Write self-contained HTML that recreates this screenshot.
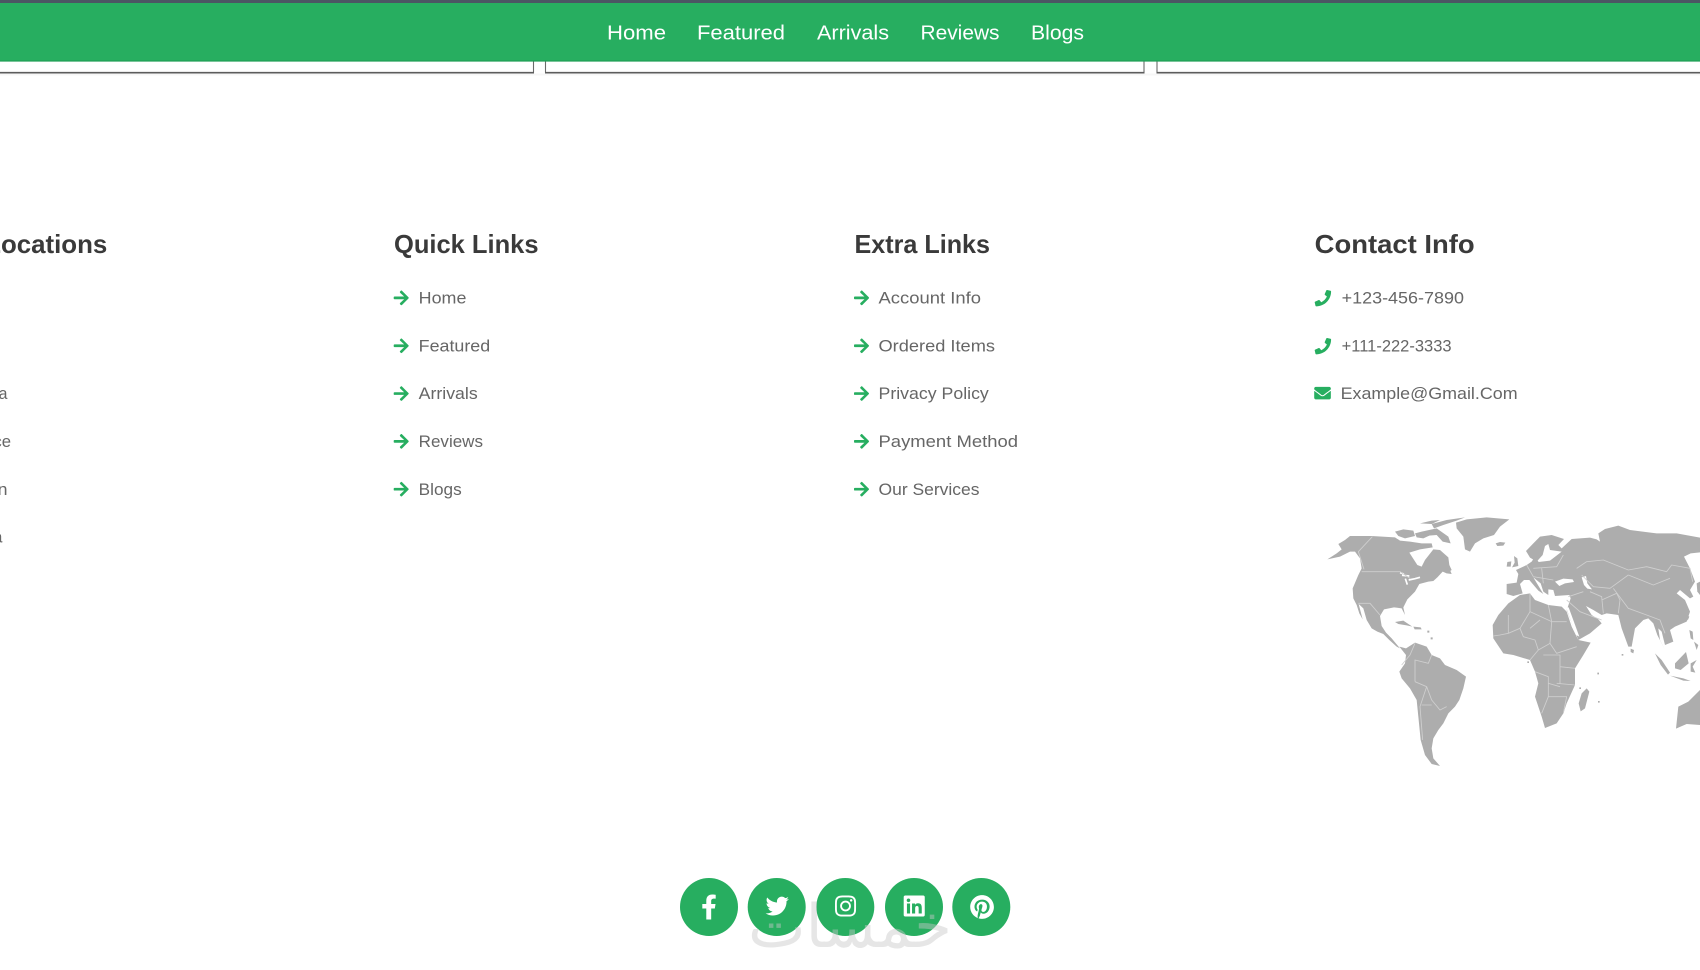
<!DOCTYPE html>
<html lang="en">
<head>
<meta charset="utf-8">
<title>Footer</title>
<style>
html,body{margin:0;padding:0;background:#fff;width:1700px;height:970px;overflow:hidden}
svg{display:block}
text{font-family:"Liberation Sans","DejaVu Sans",sans-serif}
.nav{font-size:20px;fill:#fff}
.h{font-size:26px;font-weight:700;fill:#3a3a3a}
.l{font-size:16.5px;fill:#666}
</style>
</head>
<body>
<svg width="1700" height="970" viewBox="0 0 1700 970" xmlns="http://www.w3.org/2000/svg">
<defs>
<path id="arrow" fill="#27ae60" d="M190.5 66.9l22.2-22.2c9.4-9.4 24.6-9.4 33.9 0L441 239c9.4 9.4 9.4 24.6 0 33.9L246.6 467.3c-9.4 9.4-24.6 9.4-33.9 0l-22.2-22.2c-9.5-9.5-9.3-25 .4-34.3L311.4 296H24c-13.3 0-24-10.7-24-24v-32c0-13.3 10.7-24 24-24h287.4L190.9 101.2c-9.8-9.3-10-24.8-.4-34.3z"/>
<path id="phone" fill="#27ae60" d="M493.4 24.6l-104-24c-11.3-2.6-22.9 3.3-27.5 13.9l-48 112c-4.2 9.8-1.4 21.3 6.9 28l60.6 49.6c-36 76.7-98.9 140.5-177.2 177.2l-49.6-60.6c-6.8-8.3-18.2-11.1-28-6.9l-112 48C3.9 366.5-2 378.1.6 389.4l24 104C27.1 504.2 36.7 512 48 512c256.1 0 464-207.5 464-464 0-11.2-7.7-20.9-18.6-23.4z"/>
<filter id="soft" x="-5%" y="-5%" width="110%" height="110%"><feGaussianBlur stdDeviation="0.35"/></filter>
</defs>

<rect width="1700" height="970" fill="#fff"/>

<!-- cards under the header -->
<rect x="0" y="73.5" width="1700" height="2" fill="#f7f7f7"/>
<path d="M533.5 60V72.5M545.5 60V72.5M1144 60V72.5M1157 60V72.5" fill="none" stroke="#6a6a6a" stroke-width="1.1"/>
<path d="M0 72.7H534M545 72.7H1144.5M1156.5 72.7H1700" fill="none" stroke="#5c5c5c" stroke-width="1.6"/>

<!-- header -->
<rect x="0" y="0" width="1700" height="3" fill="#4b5563"/>
<rect x="0" y="3" width="1700" height="58.5" fill="#27ae60"/>
<rect x="0" y="60.4" width="1700" height="1.2" fill="#1f9d55"/>
<text class="nav" x="607" y="39.5" textLength="59" lengthAdjust="spacingAndGlyphs">Home</text>
<text class="nav" x="697" y="39.5" textLength="88" lengthAdjust="spacingAndGlyphs">Featured</text>
<text class="nav" x="817" y="39.5" textLength="72" lengthAdjust="spacingAndGlyphs">Arrivals</text>
<text class="nav" x="920.5" y="39.5" textLength="79" lengthAdjust="spacingAndGlyphs">Reviews</text>
<text class="nav" x="1031" y="39.5" textLength="53" lengthAdjust="spacingAndGlyphs">Blogs</text>

<!-- headings -->
<text class="h" x="-68" y="253" textLength="175.3" lengthAdjust="spacingAndGlyphs">Our Locations</text>
<text class="h" x="394" y="253" textLength="144.5" lengthAdjust="spacingAndGlyphs">Quick Links</text>
<text class="h" x="854.5" y="253" textLength="135.5" lengthAdjust="spacingAndGlyphs">Extra Links</text>
<text class="h" x="1314.7" y="253" textLength="160" lengthAdjust="spacingAndGlyphs">Contact Info</text>

<!-- locations -->
<text class="l" x="-41" y="303.6" textLength="34" lengthAdjust="spacingAndGlyphs">India</text>
<text class="l" x="-41" y="351.4" textLength="30" lengthAdjust="spacingAndGlyphs">USA</text>
<text class="l" x="-41" y="399.2" textLength="48.5" lengthAdjust="spacingAndGlyphs">Russia</text>
<text class="l" x="-41" y="447" textLength="52" lengthAdjust="spacingAndGlyphs">France</text>
<text class="l" x="-41" y="494.8" textLength="48.5" lengthAdjust="spacingAndGlyphs">Japan</text>
<text class="l" x="-41" y="542.6" textLength="43.5" lengthAdjust="spacingAndGlyphs">Africa</text>

<!-- quick links -->
<g transform="translate(393.7 289.3) scale(.0335)"><use href="#arrow"/></g>
<g transform="translate(393.7 337.2) scale(.0335)"><use href="#arrow"/></g>
<g transform="translate(393.7 385) scale(.0335)"><use href="#arrow"/></g>
<g transform="translate(393.7 432.8) scale(.0335)"><use href="#arrow"/></g>
<g transform="translate(393.7 480.6) scale(.0335)"><use href="#arrow"/></g>
<text class="l" x="418.7" y="303.6" textLength="47.7" lengthAdjust="spacingAndGlyphs">Home</text>
<text class="l" x="418.7" y="351.4" textLength="71.5" lengthAdjust="spacingAndGlyphs">Featured</text>
<text class="l" x="418.7" y="399.2" textLength="59" lengthAdjust="spacingAndGlyphs">Arrivals</text>
<text class="l" x="418.7" y="447" textLength="64.3" lengthAdjust="spacingAndGlyphs">Reviews</text>
<text class="l" x="418.7" y="494.8" textLength="43" lengthAdjust="spacingAndGlyphs">Blogs</text>

<!-- extra links -->
<g transform="translate(854 289.3) scale(.0335)"><use href="#arrow"/></g>
<g transform="translate(854 337.2) scale(.0335)"><use href="#arrow"/></g>
<g transform="translate(854 385) scale(.0335)"><use href="#arrow"/></g>
<g transform="translate(854 432.8) scale(.0335)"><use href="#arrow"/></g>
<g transform="translate(854 480.6) scale(.0335)"><use href="#arrow"/></g>
<text class="l" x="878.5" y="303.6" textLength="102.5" lengthAdjust="spacingAndGlyphs">Account Info</text>
<text class="l" x="878.5" y="351.4" textLength="116.5" lengthAdjust="spacingAndGlyphs">Ordered Items</text>
<text class="l" x="878.5" y="399.2" textLength="110.3" lengthAdjust="spacingAndGlyphs">Privacy Policy</text>
<text class="l" x="878.5" y="447" textLength="139.5" lengthAdjust="spacingAndGlyphs">Payment Method</text>
<text class="l" x="878.5" y="494.8" textLength="101" lengthAdjust="spacingAndGlyphs">Our Services</text>

<!-- contact -->
<g transform="translate(1314.7 290) scale(.032)"><use href="#phone"/></g>
<g transform="translate(1314.7 338) scale(.032)"><use href="#phone"/></g>
<path transform="translate(1314.2 384.8) scale(.0325)" fill="#27ae60" d="M502.3 190.8c3.9-3.1 9.7-.2 9.7 4.7V400c0 26.5-21.5 48-48 48H48c-26.5 0-48-21.5-48-48V195.6c0-5 5.7-7.8 9.7-4.7 22.4 17.4 52.1 39.5 154.1 113.6 21.1 15.4 56.7 47.8 92.2 47.6 35.7.3 72-32.8 92.3-47.6 102-74.1 131.6-96.3 154-113.7zM256 320c23.2.4 56.6-29.2 73.4-41.4 132.7-96.3 142.8-104.7 173.4-128.7 5.8-4.5 9.2-11.5 9.2-18.9v-19c0-26.5-21.5-48-48-48H48C21.5 64 0 85.5 0 112v19c0 7.4 3.4 14.3 9.2 18.9 30.6 23.9 40.7 32.4 173.4 128.7 16.8 12.2 50.2 41.8 73.4 41.4z"/>
<text class="l" x="1341.6" y="303.6" textLength="122.4" lengthAdjust="spacingAndGlyphs">+123-456-7890</text>
<text class="l" x="1341.6" y="351.4" textLength="110" lengthAdjust="spacingAndGlyphs">+111-222-3333</text>
<text class="l" x="1340.6" y="399.2" textLength="177" lengthAdjust="spacingAndGlyphs">Example@Gmail.Com</text>

<!-- world map -->
<g filter="url(#soft)">
<g transform="translate(1300 500) scale(.33333)">
<g fill="#adadad" stroke="none">
<!-- North + Central America -->
<path d="M82 178L110 160L125 148L115 132L135 120L150 108L215 108L285 112L300 122L330 125L365 130L395 130L398 142L360 148L328 158L352 195L365 200L375 180L400 148L420 150L445 172L448 195L455 210L440 220L428 215L412 232L400 243L385 245L358 252L345 275L322 298L310 322L315 345L305 325L282 322L252 328L240 348L245 378L258 398L275 415L300 445L290 440L268 420L250 402L232 395L215 385L200 360L190 325L176 312L188 358L178 340L170 315L160 295L158 265L175 225L185 205L180 175L165 155L150 155L120 170Z"/>
<!-- Arctic islands -->
<path d="M285 95L310 88L340 92L345 108L315 115L295 108Z"/>
<path d="M345 100L365 95L392 105L370 115L350 112Z"/>
<path d="M395 72L440 60L495 52L470 62L430 75L402 85Z"/>
<path d="M365 95L410 85L445 110L452 130L428 125L410 105L372 108Z"/>
<path d="M360 70L395 62L420 60L395 72Z"/>
<path d="M440 205L450 210L455 222L440 220Z"/>
<!-- Greenland -->
<path d="M468 68L500 58L560 52L628 58L600 80L582 105L550 115L525 130L510 155L495 148L490 110L470 85Z"/>
<!-- Iceland -->
<path d="M587 130L600 126L616 128L610 137L592 138Z"/>
<!-- Caribbean -->
<path d="M285 366L310 362L337 380L320 376L295 372Z"/>
<path d="M340 380L362 382L365 388L344 388Z"/>
<path d="M382 392h6v6h-6zM392 412h6v6h-6z"/>
<!-- South America -->
<path d="M298 440L318 445L345 428L380 440L395 465L420 475L435 495L470 510L498 530L490 565L478 600L465 620L445 640L430 670L415 690L400 715L395 745L400 775L420 798L395 792L375 765L362 720L355 650L350 600L330 565L305 535L298 515L315 490L318 465Z"/>
<!-- Africa -->
<path d="M578 375L595 345L625 310L660 285L690 280L705 300L745 315L785 320L800 335L815 380L835 420L872 428L850 465L825 505L825 555L800 610L790 640L770 670L735 684L725 650L705 590L715 550L705 515L690 480L640 465L610 460L580 415Z"/>
<path d="M860 565L868 575L855 625L842 634L836 610L845 580Z"/>
<!-- Eurasia -->
<path d="M678 153L700 130L720 110L755 105L792 117L775 135L785 145L815 117L870 113L890 118L900 125L895 100L915 87L955 77L990 90L1070 100L1130 100L1200 113L1200 157L1172 160L1152 170L1170 205L1185 245L1170 270L1180 290L1170 295L1140 270L1130 280L1155 300L1170 335L1160 365L1125 380L1110 390L1120 425L1095 435L1085 395L1075 385L1080 420L1095 450L1072 405L1060 370L1045 355L1030 360L1005 385L995 440L985 440L965 385L955 345L920 340L905 345L880 330L858 318L875 345L895 358L905 370L870 400L835 420L800 330L803 322L812 295L808 285L765 288L760 270L745 268L745 285L730 275L722 250L700 232L730 282L715 272L688 240L672 240L660 252L668 280L640 288L620 282L620 252L650 248L655 222L648 210L680 195L695 185L705 170L716 186L750 182L772 165L785 155L750 150L745 132L735 138L728 165L710 185L690 173Z"/>
<!-- UK, Ireland -->
<path d="M642 168L652 175L655 198L636 202L644 188Z"/>
<path d="M622 186L634 184L632 200L620 200Z"/>
<!-- SE Asia & Pacific -->
<path d="M1065 460L1085 480L1110 518L1104 524L1082 495Z"/>
<path d="M1125 490L1158 456L1166 490L1142 510L1125 505Z"/>
<path d="M1110 527L1150 535L1172 543L1150 542Z"/>
<path d="M1172 490L1190 480L1178 500L1186 518L1172 515Z"/>
<path d="M1168 390L1178 395L1180 420L1172 415ZM1182 425L1195 435L1190 450Z"/>
<path d="M992 446L1002 450L1000 460L992 456Z"/>
<path d="M1160 345L1168 350L1163 362Z"/>
<path d="M1190 250L1200 245L1200 285L1192 275Z"/>
<!-- Australia -->
<path d="M1128 686L1135 620L1165 605L1200 570L1200 675L1160 672Z"/>
<path d="M892 518h5v5h-5zM894 603h5v5h-5zM965 462h5v5h-5zM682 484h5v5h-5zM838 562h5v5h-5z"/>
</g>
<!-- seas -->
<g fill="#fff">
<path d="M765 245L790 236L818 238L822 246L795 250L778 258Z"/>
<path d="M845 232L858 228L862 250L876 268L862 266L852 255Z"/>
<path d="M798 322L806 322L838 410L828 405Z"/>
</g>
<path d="M306 226L328 228M316 236L322 254M326 240L345 236L360 232M300 218L312 222" fill="none" stroke="#fff" stroke-width="5"/>
<!-- borders -->
<g fill="none" stroke="#cfcfcf" stroke-width="2.6" stroke-linejoin="round">
<path d="M217 110L175 155L192 208M185 215L300 215L330 235M175 310L210 310L240 345"/>
<path d="M830 205L860 185L910 180L985 210L1040 200L1100 215L1115 195L1170 205L1178 245"/>
<path d="M985 225L1060 255L1110 235M845 225L880 260L930 265L985 225M940 265L985 325L1040 345L1080 360L1095 400"/>
<path d="M870 275L905 290L910 340M905 300L950 280L960 300L955 340M800 300L840 335L905 360M805 290L850 275"/>
<path d="M680 195L700 230M700 205L770 200L790 165M700 230L760 240M725 205L730 250"/>
<path d="M345 430L330 465L305 495M395 465L385 490L345 480L345 545M345 545L380 560L395 600L420 630L440 620M380 560L360 620L368 720M365 615L395 615"/>
<path d="M625 345L625 400L660 385L690 335L690 280M745 315L755 365L800 365M690 335L755 365L750 430L770 460L830 440M690 385L720 360M625 400L600 405L580 408M660 385L670 410L705 420L715 450L690 480M750 430L715 450M730 465L780 465L780 550M705 515L745 530L745 590L725 640M745 590L800 590L790 640M780 500L825 505M770 550L825 555M745 550L780 560"/>
</g>
</g>
</g>

<!-- social -->
<circle cx="709" cy="907" r="29" fill="#27ae60"/>
<circle cx="776.7" cy="907" r="29" fill="#27ae60"/>
<circle cx="845.3" cy="907" r="29" fill="#27ae60"/>
<circle cx="914" cy="907" r="29" fill="#27ae60"/>
<circle cx="981.3" cy="907" r="29" fill="#27ae60"/>
<path fill="#fff" transform="translate(701.2 894.5) scale(.0488)" d="M279.14 288l14.22-92.66h-88.91v-60.13c0-25.35 12.42-50.06 52.24-50.06h40.42V6.26S260.43 0 225.36 0c-73.22 0-121.08 44.38-121.08 124.72v70.62H22.89V288h81.39v224h100.17V288z"/>
<path fill="#fff" transform="translate(765.6 894.4) scale(.0455)" d="M459.37 151.716c.325 4.548.325 9.097.325 13.645 0 138.72-105.583 298.558-298.558 298.558-59.452 0-114.68-17.219-161.137-47.106 8.447.974 16.568 1.299 25.34 1.299 49.055 0 94.213-16.568 130.274-44.832-46.132-.975-84.792-31.188-98.112-72.772 6.498.974 12.995 1.624 19.818 1.624 9.421 0 18.843-1.3 27.614-3.573-48.081-9.747-84.143-51.98-84.143-102.985v-1.299c13.969 7.797 30.214 12.67 47.431 13.319-28.264-18.843-46.781-51.005-46.781-87.391 0-19.492 5.197-37.36 14.294-52.954 51.655 63.675 129.3 105.258 216.365 109.807-1.624-7.797-2.599-15.918-2.599-24.04 0-57.828 46.782-104.934 104.934-104.934 30.213 0 57.502 12.67 76.67 33.137 23.715-4.548 46.456-13.32 66.599-25.34-7.798 24.366-24.366 44.833-46.132 57.827 21.117-2.273 41.584-8.122 60.426-16.243-14.292 20.791-32.161 39.308-52.628 54.253z"/>
<path fill="#fff" transform="translate(835 894) scale(.047)" d="M224.1 141c-63.6 0-114.9 51.3-114.9 114.9s51.3 114.9 114.9 114.9S339 319.5 339 255.9 287.7 141 224.1 141zm0 189.6c-41.1 0-74.7-33.5-74.7-74.7s33.5-74.7 74.7-74.7 74.7 33.5 74.7 74.7-33.6 74.7-74.7 74.7zm146.4-194.3c0 14.9-12 26.8-26.8 26.8-14.9 0-26.8-12-26.8-26.8s12-26.8 26.8-26.8 26.8 12 26.8 26.8zm76.1 27.2c-1.7-35.9-9.9-67.7-36.2-93.9-26.2-26.2-58-34.4-93.9-36.2-37-2.1-147.9-2.1-184.9 0-35.8 1.7-67.6 9.9-93.9 36.1s-34.4 58-36.2 93.9c-2.1 37-2.1 147.9 0 184.9 1.7 35.9 9.9 67.7 36.2 93.9s58 34.4 93.9 36.2c37 2.1 147.9 2.1 184.9 0 35.9-1.7 67.7-9.9 93.9-36.2 26.2-26.2 34.4-58 36.2-93.9 2.1-37 2.1-147.8 0-184.8zM398.8 388c-7.8 19.6-22.9 34.7-42.6 42.6-29.5 11.7-99.5 9-132.1 9s-102.7 2.6-132.1-9c-19.6-7.8-34.7-22.9-42.6-42.6-11.7-29.5-9-99.5-9-132.1s-2.6-102.7 9-132.1c7.8-19.6 22.9-34.7 42.6-42.6 29.5-11.7 99.5-9 132.1-9s102.7-2.6 132.1 9c19.6 7.8 34.7 22.9 42.6 42.6 11.7 29.5 9 99.5 9 132.1s2.7 102.7-9 132.1z"/>
<path fill="#fff" transform="translate(903.7 894) scale(.047)" d="M416 32H31.9C14.3 32 0 46.5 0 64.3v383.4C0 465.5 14.3 480 31.9 480H416c17.6 0 32-14.5 32-32.3V64.3c0-17.8-14.4-32.3-32-32.3zM135.4 416H69V202.2h66.5V416zm-33.2-243c-21.3 0-38.5-17.3-38.5-38.5S80.9 96 102.2 96c21.2 0 38.5 17.3 38.5 38.5 0 21.3-17.2 38.5-38.5 38.5zm282.1 243h-66.4V312c0-24.8-.5-56.7-34.5-56.7-34.6 0-39.9 27-39.9 54.9V416h-66.4V202.2h63.7v29.2h.9c8.9-16.8 30.6-34.5 62.9-34.5 67.2 0 79.7 44.3 79.7 101.9V416z"/>
<path fill="#fff" transform="translate(970.2 894.8) scale(.0478)" d="M496 256c0 137-111 248-248 248-25.6 0-50.2-3.9-73.4-11.1 10.1-16.5 25.2-43.5 30.8-65 3-11.6 15.4-59 15.4-59 8.1 15.4 31.7 28.5 56.8 28.5 74.8 0 128.7-68.8 128.7-154.3 0-81.9-66.9-143.2-152.9-143.2-107 0-163.9 71.8-163.9 150.1 0 36.4 19.4 81.7 50.3 96.1 4.7 2.2 7.2 1.2 8.3-3.3.8-3.4 5-20.3 6.9-28.1.6-2.5.3-4.7-1.7-7.1-10.1-12.5-18.3-35.3-18.3-56.6 0-54.7 41.4-107.6 112-107.6 60.9 0 103.6 41.5 103.6 100.9 0 67.1-33.9 113.6-78 113.6-24.3 0-42.6-20.1-36.7-44.8 7-29.5 20.5-61.3 20.5-82.6 0-19-10.2-34.9-31.4-34.9-24.9 0-44.9 25.7-44.9 60.2 0 22 7.4 36.8 7.4 36.8s-24.5 103.8-29 123.2c-5 21.4-3 51.6-.9 71.2C65.4 450.9 0 361.1 0 256 0 119 111 8 248 8s248 111 248 248z"/>

<!-- watermark -->
<text x="748" y="947" font-size="60" fill="#c8c8c8" opacity=".45" style='font-family:"DejaVu Sans",sans-serif' direction="rtl" text-anchor="end" textLength="204" lengthAdjust="spacingAndGlyphs">خمسات</text>
</svg>
</body>
</html>
